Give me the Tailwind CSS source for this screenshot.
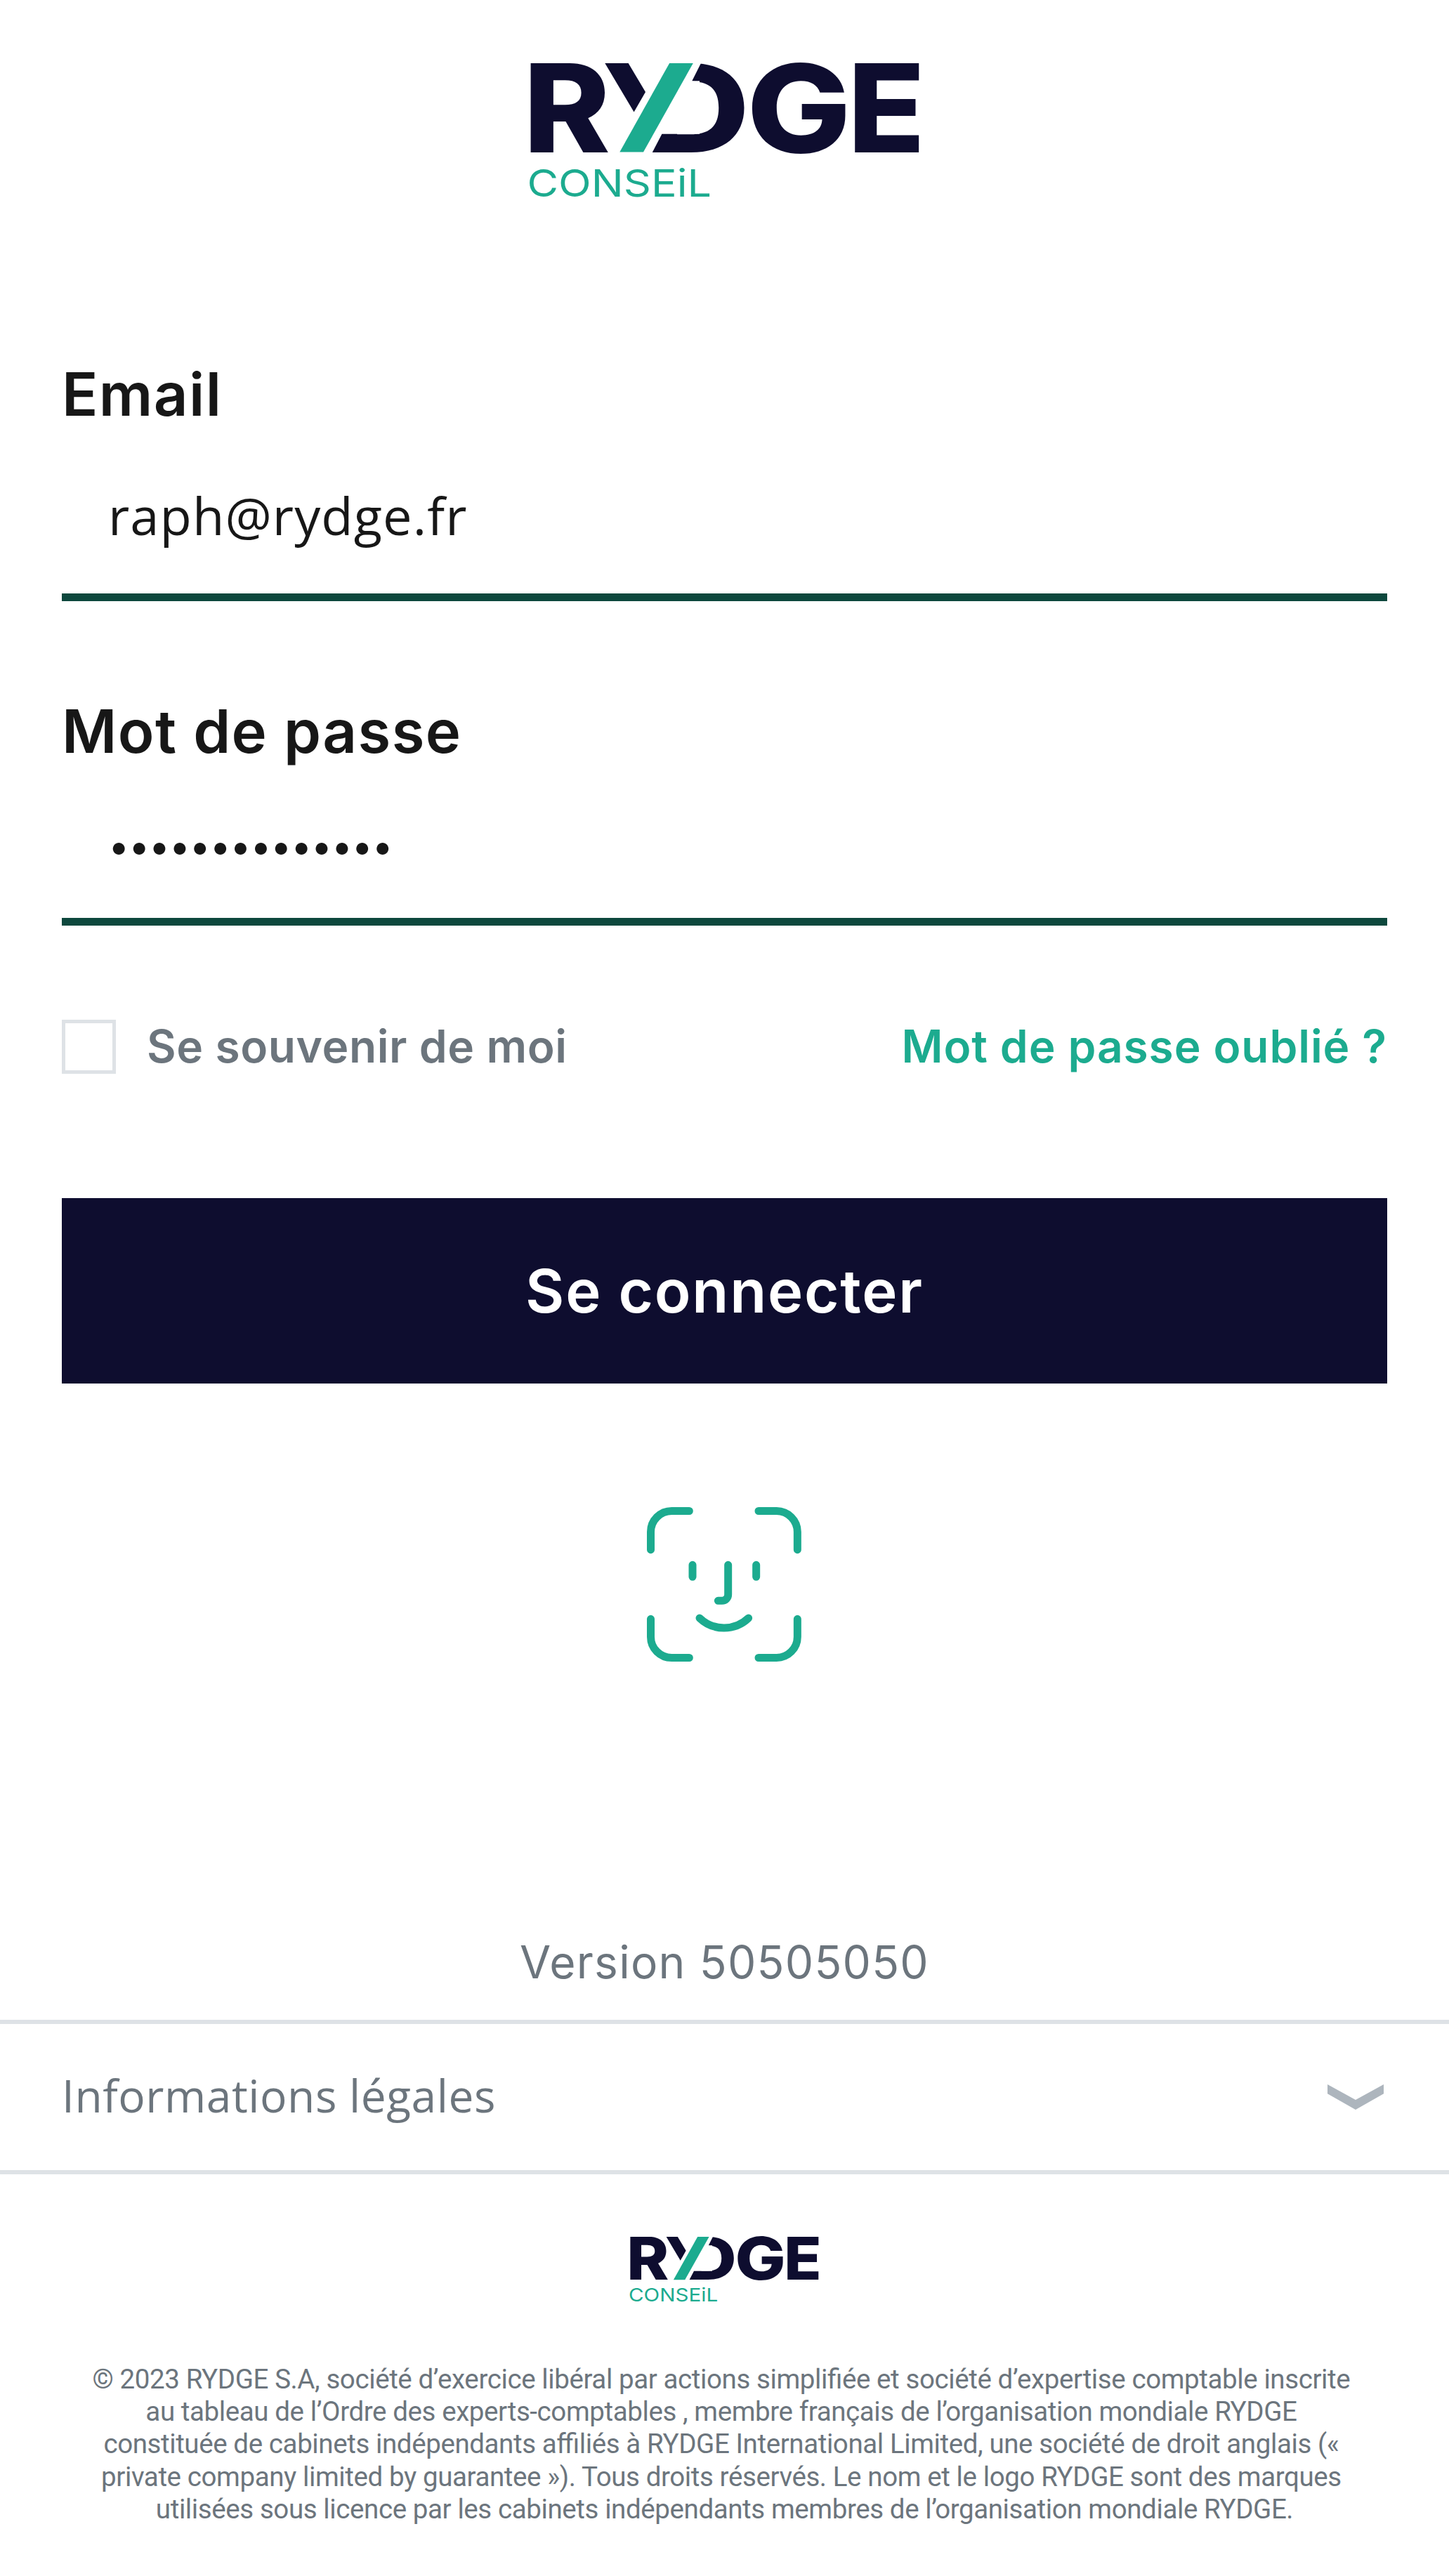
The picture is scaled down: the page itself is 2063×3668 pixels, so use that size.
<!DOCTYPE html>
<html lang="fr">
<head>
  <meta charset="UTF-8">
  <meta name="viewport" content="width=device-width, initial-scale=1.0">
  <title>Rydge Conseil - Connexion</title>
  <script src="https://cdn.jsdelivr.net/npm/@tailwindcss/browser@4"></script>
</head>
<body class="bg-white min-h-screen font-['Inter',sans-serif] text-[#171717]">

  <!-- Logo -->
  <header class="flex justify-center pt-[70px]">
    <svg class="w-[600px] h-[230px] -ml-[3px] overflow-visible" viewBox="0 0 600 230" fill="#0e0d2f">
      <defs>
        <clipPath id="cutD">
          <path d="M269 10H345V160H192L212.4 120.7H266V45.3H255.3L273 10Z" />
        </clipPath>
      </defs>
      <g id="logo">
        <g font-family="Inter, sans-serif" font-weight="800" font-size="174">
          <text x="15" y="146.5" textLength="124" lengthAdjust="spacingAndGlyphs">R</text>
          <text x="186" y="146.5" textLength="152" lengthAdjust="spacingAndGlyphs" clip-path="url(#cutD)">D</text>
          <text x="333" y="146.5" textLength="149" lengthAdjust="spacingAndGlyphs">G</text>
          <text x="477" y="146.5" textLength="110" lengthAdjust="spacingAndGlyphs">E</text>
        </g>
        <path d="M131.3 20H164.6L189 61L172.6 89.5Z" />
        <path d="M223.1 20H256.8L186 146.5H152.3Z" fill="#1cab8f" />
        <text x="20.5" y="210" font-family="Inter, sans-serif" font-size="54" fill="#1cab8f" textLength="262.5" lengthAdjust="spacingAndGlyphs">CONSEiL</text>
      </g>
    </svg>
  </header>

  <!-- Login form -->
  <main class="px-[88px] mt-[207px] flex flex-col">
    <div class="border-b-[11px] border-[#0d483d] pb-[61px]">
      <div class="text-[85px] leading-[110px] font-semibold tracking-[1.4px]">Email</div>
      <div class="mt-[67px] pl-[66px] text-[74px] leading-[100px] tracking-[1.1px] font-['Open_Sans',sans-serif]">raph@rydge.fr</div>
    </div>

    <div class="mt-[131px] border-b-[11px] border-[#0d483d] pb-[52px]">
      <div class="text-[85px] leading-[110px] font-semibold tracking-[1.4px]">Mot de passe</div>
      <div class="mt-[58px] pl-[66px] text-[54px] leading-[100px] tracking-[-1.5px]">••••••••••••••</div>
    </div>

    <div class="mt-[134px] h-[77px] flex items-center justify-between text-[64px] font-semibold">
      <div class="flex items-center gap-[44px] text-[#6c757d]">
        <div class="size-[77px] border-[5px] border-[#dee2e6]"></div>
        <span class="pb-[2px] tracking-[0.6px]">Se souvenir de moi</span>
      </div>
      <a class="pb-[2px] tracking-[0.9px] text-[#1cab8f]">Mot de passe oublié ?</a>
    </div>

    <button class="mt-[177px] h-[264px] pt-[2px] bg-[#0e0d2f] text-white text-[85px] font-semibold tracking-[1.8px]">Se connecter</button>

    <!-- Face ID -->
    <svg class="mt-[176px] mr-px size-[220px] self-center" viewBox="0 0 660 660" fill="none" stroke="#1cab8f" stroke-width="33" stroke-linecap="round">
      <path d="M16.5 182V106A89.5 89.5 0 0 1 106 16.5H181" />
      <path d="M477 16.5H554A89.5 89.5 0 0 1 643 106V182" />
      <path d="M16.5 478V554A89.5 89.5 0 0 0 106 643.5H181" />
      <path d="M477 643.5H554A89.5 89.5 0 0 0 643 554V478" />
      <path d="M195 247V298M467 247V298" />
      <path d="M347 247V373A26 26 0 0 1 321 400H304" />
      <path d="M225 474A151 151 0 0 0 434 474" />
    </svg>
  </main>

  <div class="mt-[388px] text-center text-[64px] leading-[80px] tracking-[1.25px] text-[#6c757d]">Version 50505050</div>

  <!-- Legal accordion -->
  <div class="mt-[42px] h-[220px] px-[88px] border-y-[6px] border-[#dee2e6] flex items-center justify-between text-[#6c757d]">
    <span class="pb-[5px] text-[64px] tracking-[0.55px] font-['Open_Sans',sans-serif]">Informations légales</span>
    <svg class="w-[80px] h-[36px] mr-[5px]" viewBox="0 0 240 108" fill="#adb5bd">
      <path d="M0 0L120 66L240 0V40L120 108L0 40Z" />
    </svg>
  </div>

  <footer class="mt-[79px] flex flex-col items-center">
    <svg class="w-[291px] h-[112px] -ml-[2px] overflow-visible" viewBox="0 0 600 230" fill="#0e0d2f">
      <use href="#logo" />
    </svg>
    <p class="mt-[78px] text-center whitespace-nowrap font-['Roboto',sans-serif] text-[38.5px] leading-[46.2px] tracking-[-0.4px] [font-feature-settings:'liga'] text-[#6c757d]">
      © 2023 RYDGE S.A, société d’exercice libéral par actions simplifiée et société d’expertise comptable inscrite&nbsp;<br>
      au tableau de l’Ordre des experts-comptables , membre français de l’organisation mondiale RYDGE&nbsp;<br>
      constituée de cabinets indépendants affiliés à RYDGE International Limited, une société de droit anglais («&nbsp;<br>
      private company limited by guarantee »). Tous droits réservés. Le nom et le logo RYDGE sont des marques&nbsp;<br>
      utilisées sous licence par les cabinets indépendants membres de l’organisation mondiale RYDGE.
    </p>
  </footer>

</body>
</html>
